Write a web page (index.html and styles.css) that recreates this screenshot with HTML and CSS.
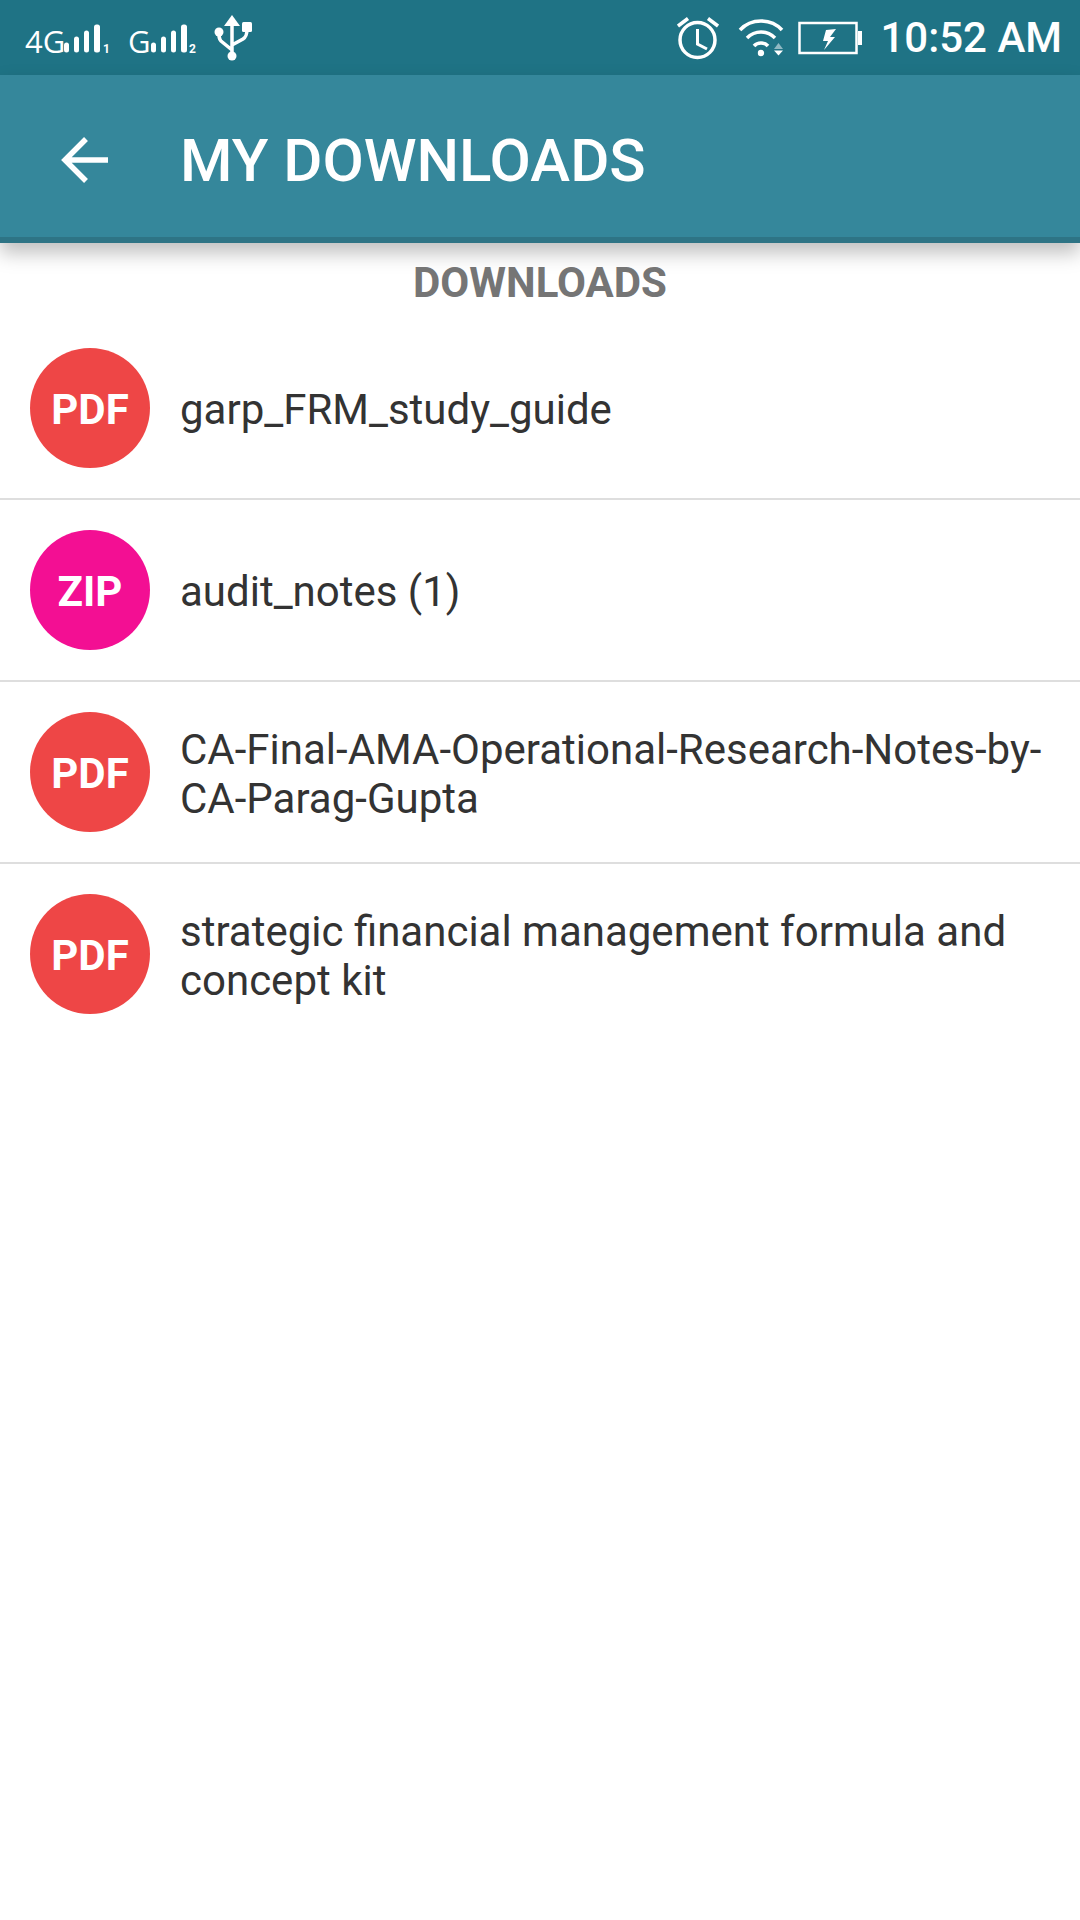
FILE: index.html
```html
<!DOCTYPE html>
<html lang="en">
<head>
    <meta charset="UTF-8">
    <meta name="viewport" content="width=device-width, initial-scale=1.0">
    <title>My Downloads</title>
    <link rel="stylesheet" href="styles.css">
</head>
<body>
    <div class="status-bar">
        <div class="status-left">
            <svg width="176" height="44" viewBox="24 15.500 176 44">
                <text class="sim-text" x="25" y="52">4G</text>
                <rect x="64" y="42" width="5" height="10" rx="2.500" fill="#fff"/>
                <rect x="74" y="36" width="5" height="16" rx="2.500" fill="#fff"/>
                <rect x="84" y="30" width="5" height="22" rx="2.500" fill="#fff"/>
                <rect x="94" y="24" width="6" height="28" rx="2.500" fill="#fff"/>
                <text class="sim-num" x="103" y="52">1</text>
                <text class="sim-text" x="128" y="52">G</text>
                <rect x="151" y="42" width="5" height="10" rx="2.500" fill="#fff"/>
                <rect x="161" y="36" width="5" height="16" rx="2.500" fill="#fff"/>
                <rect x="171" y="30" width="5" height="22" rx="2.500" fill="#fff"/>
                <rect x="181" y="24" width="6" height="28" rx="2.500" fill="#fff"/>
                <text class="sim-num" x="189" y="52">2</text>
            </svg>
            <svg width="38" height="46" viewBox="0 0 38 46">
                <path d="M18 41V6M18 35L7 26C5 24 5 22 5 17M18 30L29 24C32 22 33 20 33 14" fill="none" stroke="#fff" stroke-width="3.500"/>
                <path d="M18 0L26 11H10Z" fill="#fff"/>
                <circle cx="5" cy="17" r="4.500" fill="#fff"/>
                <rect x="28" y="7" width="10" height="10" rx="1.500" fill="#fff"/>
                <circle cx="18" cy="41" r="4.500" fill="#fff"/>
            </svg>
        </div>
        <div class="status-right">
            <svg class="alarm" width="42" height="44" viewBox="0 0 42 44">
                <circle cx="20.500" cy="24" r="17.500" fill="none" stroke="#fff" stroke-width="3.500"/>
                <path d="M20.500 13V28L30 33" fill="none" stroke="#fff" stroke-width="3"/>
                <path d="M1 10L11 2.500M41 10L31 2.500" fill="none" stroke="#fff" stroke-width="3.500"/>
            </svg>
            <svg width="46" height="38" viewBox="0 0 46 38">
                <path d="M2 11C13 -1 33 -1 44 11" fill="none" stroke="#fff" stroke-width="3.500"/>
                <path d="M9 19C17 11 29 11 37 19" fill="none" stroke="#fff" stroke-width="3.500"/>
                <path d="M16 27C19.500 23 26.500 23 30 27" fill="none" stroke="#fff" stroke-width="3.500"/>
                <circle cx="23" cy="34" r="3.200" fill="#fff"/>
                <path d="M36 30L40.500 24L45 30Z" fill="#8fb8c2"/>
                <path d="M36 31.500H45L40.500 36.500Z" fill="#fff"/>
            </svg>
            <svg width="64" height="34" viewBox="0 0 64 34">
                <rect x="1.500" y="2" width="57" height="30" fill="none" stroke="#fff" stroke-width="2.500"/>
                <rect x="60" y="10" width="4" height="14" fill="#fff"/>
                <path d="M38 8L28 9L25 20H30L26 29L37 16H32Z" fill="#fff"/>
            </svg>
            <span class="clock">10:52 AM</span>
        </div>
    </div>

    <header class="app-bar">
        <svg width="48" height="48" viewBox="0 0 48 48">
            <path d="M48 24H5M26 3L5 24L26 45" fill="none" stroke="#fff" stroke-width="5.500"/>
        </svg>
        <h1>MY DOWNLOADS</h1>
    </header>

    <h2 class="section-title">DOWNLOADS</h2>

    <ul class="file-list">
        <li class="file-row">
            <span class="badge badge-pdf">PDF</span>
            <span class="file-name">garp_FRM_study_guide</span>
        </li>
        <li class="file-row">
            <span class="badge badge-zip">ZIP</span>
            <span class="file-name">audit_notes (1)</span>
        </li>
        <li class="file-row">
            <span class="badge badge-pdf">PDF</span>
            <span class="file-name">CA-Final-AMA-Operational-Research-Notes-by-CA-Parag-Gupta</span>
        </li>
        <li class="file-row">
            <span class="badge badge-pdf">PDF</span>
            <span class="file-name">strategic financial management formula and concept kit</span>
        </li>
    </ul>
</body>
</html>
```

FILE: styles.css
```css
* {
    box-sizing: border-box;
}
body {
    margin: 0;
    font-family: Roboto, "Liberation Sans", sans-serif;
    background-color: #fff;
}
.status-bar {
    height: 75px;
    background-color: #1f7385;
    display: flex;
    justify-content: space-between;
    align-items: center;
    padding: 0 18px 0 24px;
    color: #fff;
}
.status-left, .status-right {
    display: flex;
    align-items: center;
    gap: 14px;
}
.sim-text {
    font-family: "Open Sans", sans-serif;
    font-size: 31px;
    fill: #fff;
}
.sim-num {
    font-size: 12px;
    font-weight: 700;
    fill: #fff;
}
.alarm {
    margin-right: 5px;
}
.clock {
    font-size: 42px;
    font-weight: 500;
    margin-left: 4px;
}
.app-bar {
    height: 168px;
    padding: 8px 0 0 60px;
    background-color: #35879b;
    border-bottom: 6px solid #2e7485;
    box-shadow: 0 10px 18px rgba(0, 0, 0, 0.25);
    display: flex;
    align-items: center;
    gap: 72px;
    color: #fff;
}
h1 {
    margin: 0;
    font-size: 60px;
    font-weight: 500;
}
.section-title {
    margin: 0;
    height: 75px;
    line-height: 80px;
    text-align: center;
    font-size: 42px;
    font-weight: 700;
    color: #757575;
}
.file-list {
    list-style: none;
    margin: 0;
    padding: 0;
}
.file-row {
    display: flex;
    align-items: center;
    gap: 30px;
    padding: 30px;
    border-bottom: 2px solid #dedede;
}
.file-row:last-child {
    border-bottom: none;
}
.badge {
    flex: none;
    width: 120px;
    height: 120px;
    padding-top: 2px;
    border-radius: 50%;
    display: flex;
    align-items: center;
    justify-content: center;
    color: #fff;
    font-size: 42px;
    font-weight: 700;
}
.badge-pdf {
    background-color: #ee4646;
}
.badge-zip {
    background-color: #f30f93;
}
.file-name {
    padding-top: 3px;
    font-size: 42px;
    line-height: 49px;
    color: #333;
}
```
